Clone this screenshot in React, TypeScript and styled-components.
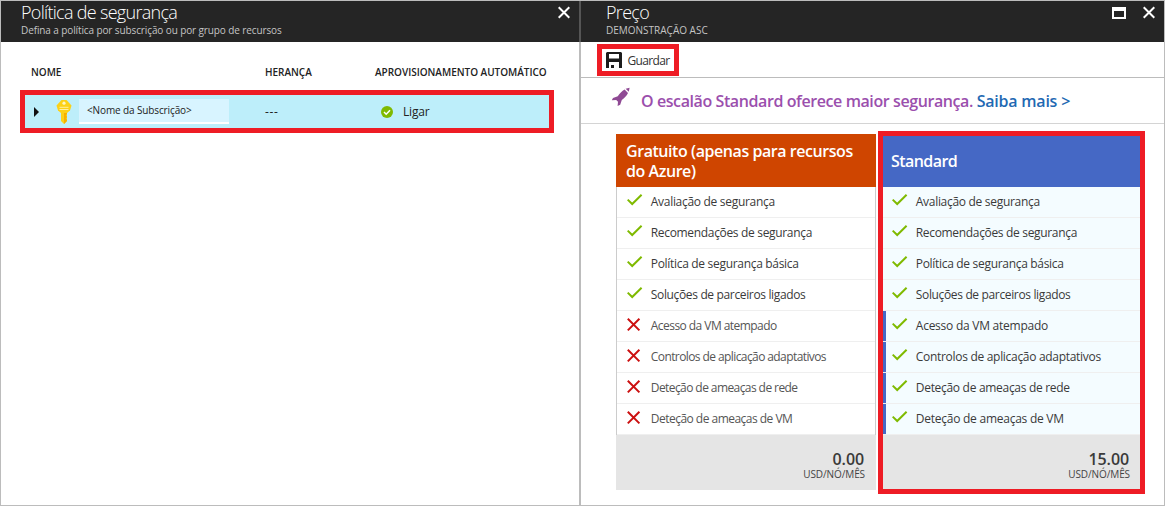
import React from "react";
import styled, { createGlobalStyle } from "styled-components";

const Global = createGlobalStyle`
  * { box-sizing: border-box; }
  body { margin: 0; font-family: "Open Sans", "Noto Sans", sans-serif; background: #fff; color: #222; }
`;

const Frame = styled.div`
  width: 1165px; height: 506px; display: flex;
  border: 1px solid #bcbcbc; background: #fff; overflow: hidden;
`;
const Blade = styled.section<{ $width: number }>`
  width: ${p => p.$width}px; flex: none; display: flex; flex-direction: column;
`;
const Divider = styled.div`
  width: 2px; flex: none;
  background: linear-gradient(#555 0 41px, #bcbcbc 41px);
`;
const Header = styled.header<{ $indent: number }>`
  height: 41px; flex: none; display: flex; justify-content: space-between;
  padding-left: ${p => p.$indent}px; background: #252525;
`;
const Titles = styled.div`display: flex; flex-direction: column; white-space: nowrap;`;
const Title = styled.h1`
  margin: 0; font-size: 18px; line-height: 22px; font-weight: 300; color: #fff;
  letter-spacing: -0.7px;
`;
const Subtitle = styled.div<{ $tracking?: number }>`
  font-size: 10px; line-height: 14px; color: #c4c4c4;
  letter-spacing: ${p => p.$tracking ?? 0}px;
`;
const Controls = styled.div<{ $right: number }>`
  display: flex; gap: 17px; padding: 5px ${p => p.$right}px 0 0;
  svg { display: block; }
`;

const Table = styled.div`padding: 23px 0 0 19px;`;
const Columns = styled.div`
  display: grid; grid-template-columns: 234px 110px 1fr; padding-left: 11px;
  height: 25px; font-size: 10px; line-height: 14px; font-weight: 600; white-space: nowrap;
  letter-spacing: -0.02px;
`;
const SelectedRow = styled.div`
  width: 534px; height: 43px; border: 5px solid #ee1c25; background: #bdeefa;
  display: flex; align-items: center; white-space: nowrap;
`;
const Expander = styled.svg`margin-left: 8px; flex: none;`;
const KeyIcon = styled.svg`margin-left: 17px; flex: none;`;
const NameField = styled.div`
  width: 150px; height: 25px; margin-left: 7px; padding-left: 8px;
  background: #d8f4ff; border-bottom: 2px solid #fff;
  font-size: 10px; line-height: 22px; letter-spacing: -0.12px;
`;
const Inherit = styled.span`width: 116px; margin-left: 36px; font-size: 12px; letter-spacing: 0.7px;`;
const Status = styled.span`
  display: flex; align-items: center; gap: 10px; font-size: 12px; letter-spacing: -0.2px;
`;

const Toolbar = styled.div`
  height: 36px; flex: none; padding: 2px 0 0 16px; border-bottom: 1px solid #bcbcbc;
`;
const SaveButton = styled.button`
  width: 82px; height: 32px; border: 5px solid #ee1c25; background: #fff; padding: 0 0 0 4px;
  display: flex; align-items: center; gap: 5.5px; white-space: nowrap;
  font: 12px "Open Sans", sans-serif; letter-spacing: -0.65px; color: #333;
`;
const Banner = styled.div`
  height: 46px; flex: none; display: flex; padding-left: 30px;
  border-bottom: 1px solid #d4d4d4; white-space: nowrap;
  svg { margin-top: 9px; flex: none; }
`;
const Message = styled.p`
  margin: 0 0 0 10px; font-size: 16px; line-height: 46px; font-weight: 600; color: #9b4fad;
  letter-spacing: -0.41px;
`;
const Link = styled.a`color: #1f69b3; letter-spacing: -0.22px;`;
const Plans = styled.div`display: flex; padding: 7px 0 0 35px; gap: 2px; align-items: flex-start;`;
const Plan = styled.article<{ $selected?: boolean }>`
  width: ${p => (p.$selected ? 267 : 260)}px;
  margin-top: ${p => (p.$selected ? 0 : 3)}px;
  ${p => p.$selected && "border: 5px solid #ee1c25;"}
`;
const PlanTitle = styled.h2<{ $selected?: boolean }>`
  margin: 0; height: ${p => (p.$selected ? 51 : 53)}px; display: flex; align-items: center;
  padding: ${p => (p.$selected ? "0 0 1px 8px" : "1px 0 0 10px")};
  background: ${p => (p.$selected ? "#4568c5" : "#cf4500")};
  color: #fff; font-size: 16px; line-height: 20px; font-weight: 600; white-space: pre;
  letter-spacing: ${p => (p.$selected ? -0.55 : -0.44)}px;
`;
const Features = styled.ul<{ $selected?: boolean }>`
  list-style: none; margin: 0; padding: 0;
  background: ${p => (p.$selected ? "#f4fcff" : "#fff")};
  ${p => !p.$selected && "border: solid #ccc; border-width: 0 1px;"}
`;
const Feature = styled.li<{ $marked?: boolean; $selected?: boolean; $muted?: boolean; $tracking: number }>`
  height: 31px; display: flex; align-items: center; white-space: nowrap;
  border-bottom: 1px solid #efefef;
  padding: 0 0 1px ${p => (p.$selected ? 9 : 10)}px;
  font-size: 12px; color: ${p => (p.$muted ? "#555" : "#3a3a3a")};
  letter-spacing: ${p => p.$tracking}px;
  background: ${p => (p.$marked ? "linear-gradient(90deg, #4568c5 3px, transparent 3px)" : "none")};
  background-clip: padding-box;
  svg { margin: 0 7.8px 1px 0; flex: none; }
`;
const PlanFooter = styled.footer<{ $selected?: boolean }>`
  height: ${p => (p.$selected ? 54 : 55)}px; background: #e5e5e5; text-align: right;
  padding: 14px ${p => (p.$selected ? 10 : 11)}px 0 0;
`;
const Price = styled.div`
  padding-right: 1px; font-size: 16px; line-height: 20px; font-weight: 600; color: #3a3a3a;
  letter-spacing: -0.1px;
`;
const Unit = styled.div`font-size: 10px; line-height: 10px; color: #444; letter-spacing: -0.1px;`;

const Close = () => (
  <svg width="12" height="13" viewBox="0 0 12 13">
    <path d="M0.7 1.2 11.3 11.8M11.3 1.2 0.7 11.8" stroke="#fff" strokeWidth="2" />
  </svg>
);
const Maximize = () => (
  <svg width="14" height="13" viewBox="0 0 14 13">
    <path d="M0 1h14v12H0zM2 5v6h10V5z" fill="#fff" fillRule="evenodd" />
  </svg>
);
const Check = () => (
  <svg width="16" height="16" viewBox="0 0 16 16">
    <path d="M0.7 6.6 5.2 11 14.6 1.8" fill="none" stroke="#7fba00" strokeWidth="2" />
  </svg>
);
const Cross = () => (
  <svg width="16" height="16" viewBox="0 0 16 16">
    <path d="M0.8 1.8 12.4 13.4M12.4 1.8 0.8 13.4" stroke="#cc1010" strokeWidth="2" />
  </svg>
);
const Rocket = () => (
  <svg width="20" height="20" viewBox="0 0 20 20" fill="#8f4a94">
    <path d="M18.6 0.8 17.8 4.7 14.6 1.7z" />
    <path d="M13.6 2.6 17 6 C15.9 8.8 13.3 11 10.8 12.9 L9.2 17.8 6.6 19 7 14.8 5.2 13 0.8 13.2 2 11 6.8 9.2 C8.5 6.8 11 4 13.6 2.6z" />
  </svg>
);

type Item = { label: string; free: number; standard: number; premium?: boolean };
const items: Item[] = [
  { label: "Avaliação de segurança", free: -0.3, standard: -0.3 },
  { label: "Recomendações de segurança", free: -0.33, standard: -0.33 },
  { label: "Política de segurança básica", free: -0.31, standard: -0.31 },
  { label: "Soluções de parceiros ligados", free: -0.35, standard: -0.35 },
  { label: "Acesso da VM atempado", free: -0.55, standard: -0.25, premium: true },
  { label: "Controlos de aplicação adaptativos", free: -0.59, standard: -0.3, premium: true },
  { label: "Deteção de ameaças de rede", free: -0.58, standard: -0.3, premium: true },
  { label: "Deteção de ameaças de VM", free: -0.52, standard: -0.25, premium: true },
];

const PlanCard = ({ title, price, selected }: { title: string; price: string; selected?: boolean }) => (
  <Plan $selected={selected}>
    <PlanTitle $selected={selected}>{title}</PlanTitle>
    <Features $selected={selected}>
      {items.map(({ label, free, standard, premium }) => (
        <Feature
          key={label}
          $selected={selected}
          $marked={premium && selected}
          $muted={premium && !selected}
          $tracking={selected ? standard : free}
        >
          {premium && !selected ? <Cross /> : <Check />}
          {label}
        </Feature>
      ))}
    </Features>
    <PlanFooter $selected={selected}>
      <Price>{price}</Price>
      <Unit>USD/NÓ/MÊS</Unit>
    </PlanFooter>
  </Plan>
);

export default function App() {
  return (
    <Frame>
      <Global />
      <Blade $width={578}>
        <Header $indent={20}>
          <Titles>
            <Title>Política de segurança</Title>
            <Subtitle $tracking={-0.11}>Defina a política por subscrição ou por grupo de recursos</Subtitle>
          </Titles>
          <Controls $right={9}><Close /></Controls>
        </Header>
        <Table>
          <Columns>
            <span>NOME</span>
            <span>HERANÇA</span>
            <span>APROVISIONAMENTO AUTOMÁTICO</span>
          </Columns>
          <SelectedRow>
            <Expander width="6" height="10" viewBox="0 0 6 10"><path d="M1 0 6 5 1 10z" fill="#111" /></Expander>
            <KeyIcon width="16" height="24" viewBox="0 0 16 24">
              <path d="M5 11h6v10l-3 3-3-3z" fill="#fcd116" />
              <path d="M8 11h3v3l-1.3 1.3L11 17l-1.3 1.5L11 20v1l-3 3z" fill="#f5b000" />
              <path d="M5.5 0h5L15.5 5.5 14 10.5 11 13H5L2 10.5 0.5 5.5z" fill="#fcd116" />
              <circle cx="8" cy="3.2" r="1.6" fill="#fff6c0" />
              <path d="M3.5 7.3h9M3.5 9.5h9" stroke="#fff0a0" />
            </KeyIcon>
            <NameField>&lt;Nome da Subscrição&gt;</NameField>
            <Inherit>---</Inherit>
            <Status>
              <svg width="12" height="12" viewBox="0 0 12 12">
                <circle cx="6" cy="6" r="6" fill="#7fba00" />
                <path d="M3 6 5.2 8.2 9 4.2" fill="none" stroke="#fff" strokeWidth="1.5" />
              </svg>
              Ligar
            </Status>
          </SelectedRow>
        </Table>
      </Blade>
      <Divider />
      <Blade $width={583}>
        <Header $indent={25}>
          <Titles>
            <Title>Preço</Title>
            <Subtitle>DEMONSTRAÇÃO ASC</Subtitle>
          </Titles>
          <Controls $right={9}><Maximize /><Close /></Controls>
        </Header>
        <Toolbar>
          <SaveButton>
            <svg width="16" height="16" viewBox="0 0 16 16">
              <path d="M1 0h14l1 1v15H0V1zM3 2v4.5h10V2zM3 10v6h2v-3h3v3h5v-6z" fill="#1c1c1c" fillRule="evenodd" />
            </svg>
            Guardar
          </SaveButton>
        </Toolbar>
        <Banner>
          <Rocket />
          <Message>O escalão Standard oferece maior segurança. <Link>Saiba mais &gt;</Link></Message>
        </Banner>
        <Plans>
          <PlanCard title={"Gratuito (apenas para recursos\ndo Azure)"} price="0.00" />
          <PlanCard title="Standard" price="15.00" selected />
        </Plans>
      </Blade>
    </Frame>
  );
}
